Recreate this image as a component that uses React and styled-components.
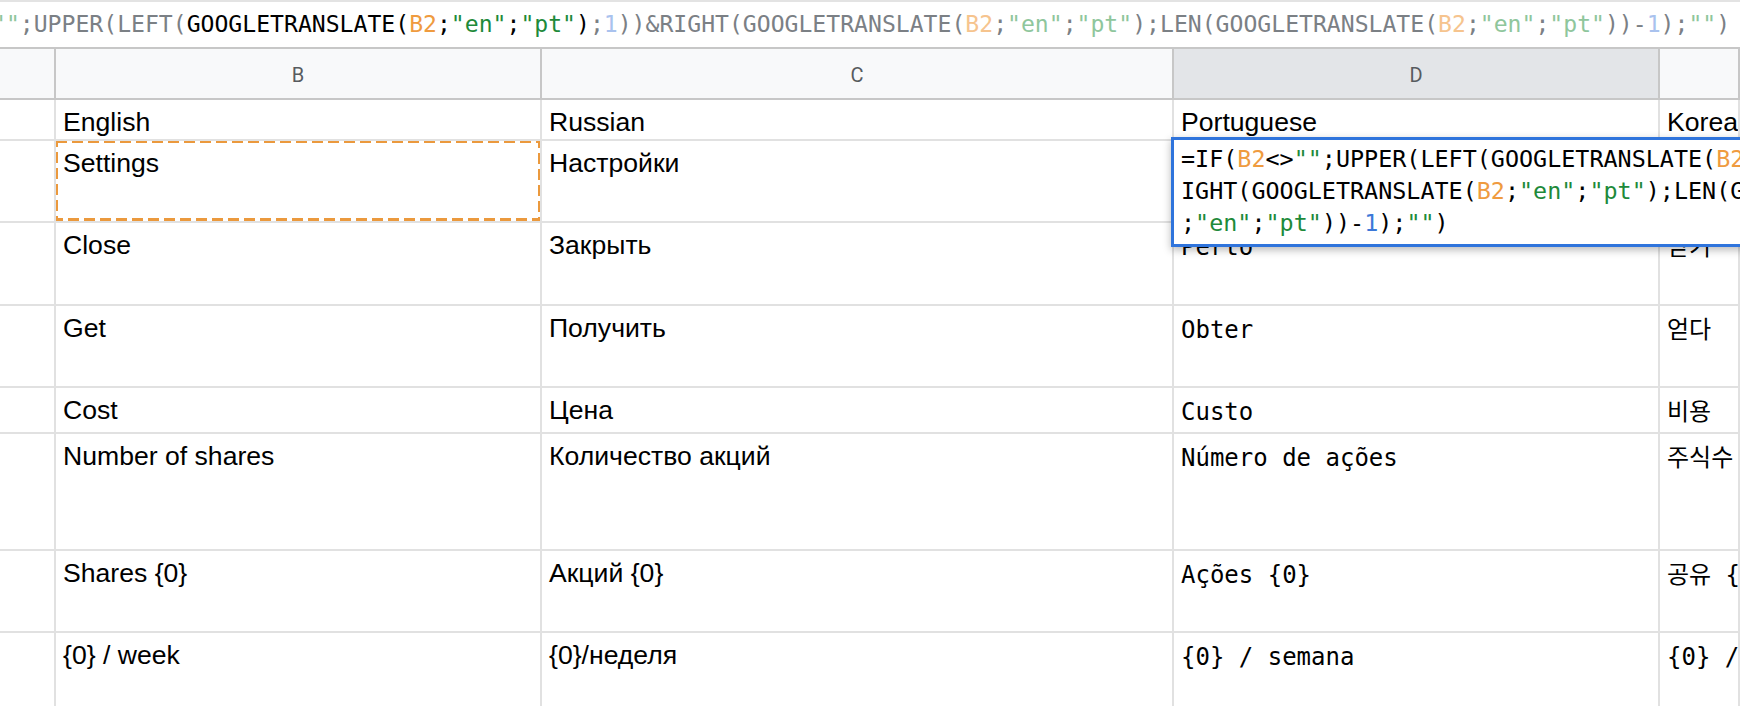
import React from 'react';
import styled, { createGlobalStyle } from 'styled-components';

// ─── Palette ──────────────────────────────────────────────────────────────────
const C = {
  k: '#000000',
  muted: '#7b8085',
  ref: '#ef9b3f',
  refFaded: '#f6c48e',
  str: '#1e8a3a',
  strFaded: '#8fc69c',
  num: '#3c78d8',
  numFaded: '#a9c2ee',
};

// ─── Data ─────────────────────────────────────────────────────────────────────
const columns = [
  { key: 'A', width: 56 },
  { key: 'B', width: 486, label: 'B' },
  { key: 'C', width: 632, label: 'C' },
  { key: 'D', width: 486, label: 'D', active: true },
  { key: 'E', width: 0 },
];

const rowHeights = [41, 82, 83, 82, 46, 117, 82, 82];

const rows = [
  ['English', 'Russian', 'Portuguese', 'Korean'],
  ['Settings', 'Настройки', 'Configurações', '설정'],
  ['Close', 'Закрыть', 'Perto', '닫기'],
  ['Get', 'Получить', 'Obter', '얻다'],
  ['Cost', 'Цена', 'Custo', '비용'],
  ['Number of shares', 'Количество акций', 'Número de ações', '주식수'],
  ['Shares {0}', 'Акций {0}', 'Ações {0}', '공유 {0}'],
  ['{0} / week', '{0}/неделя', '{0} / semana', '{0} / 주'],
];

// formula bar, scrolled so that "=IF(B2<>" is out of view
const barTokens = [
  ['""', C.strFaded], [';UPPER(LEFT(', C.muted], ['GOOGLETRANSLATE(', C.k], ['B2', C.ref],
  [';', C.k], ['"en"', C.str], [';', C.k], ['"pt"', C.str], [')', C.k], [';', C.muted],
  ['1', C.numFaded], ['))&RIGHT(GOOGLETRANSLATE(', C.muted], ['B2', C.refFaded], [';', C.muted],
  ['"en"', C.strFaded], [';', C.muted], ['"pt"', C.strFaded], [');LEN(GOOGLETRANSLATE(', C.muted],
  ['B2', C.refFaded], [';', C.muted], ['"en"', C.strFaded], [';', C.muted], ['"pt"', C.strFaded],
  ['))-', C.muted], ['1', C.numFaded], [');', C.muted], ['""', C.strFaded], [')', C.muted],
];

const editorLines = [
  [['=IF(', C.k], ['B2', C.ref], ['<>', C.k], ['""', C.str], [';UPPER(LEFT(GOOGLETRANSLATE(', C.k],
    ['B2', C.ref], [';', C.k], ['"en"', C.str], [';', C.k], ['"pt"', C.str], [');', C.k], ['1', C.num], ['))&R', C.k]],
  [['IGHT(GOOGLETRANSLATE(', C.k], ['B2', C.ref], [';', C.k], ['"en"', C.str], [';', C.k], ['"pt"', C.str],
    [');LEN(GOOGLETRANSLATE(', C.k], ['B2', C.ref]],
  [[';', C.k], ['"en"', C.str], [';', C.k], ['"pt"', C.str], ['))-', C.k], ['1', C.num], [');', C.k],
    ['""', C.str], [')', C.k]],
];

// ─── Styled components ────────────────────────────────────────────────────────
const GlobalStyle = createGlobalStyle`
  html, body { margin: 0; padding: 0; background: #ffffff; }
  body { overflow: hidden; }
`;

const Page = styled.div`
  position: relative;
  width: 1740px;
  height: 706px;
  overflow: hidden;
  background: #ffffff;
  display: flex;
  flex-direction: column;
`;

const FormulaBar = styled.div`
  flex: 0 0 49px;
  box-sizing: border-box;
  border-top: 2px solid #e3e3e3;
  border-bottom: 2px solid #c7c7c7;
  display: flex;
  align-items: center;
  overflow: hidden;
  white-space: pre;
  font-family: "DejaVu Sans Mono", "Liberation Mono", monospace;
  font-size: 23.1px;
  padding-bottom: 1px;
`;

const BarText = styled.div`
  margin-left: -8px;
`;

const Tok = styled.span`
  color: ${({ $c }) => $c};
`;

const Sheet = styled.div`
  display: grid;
  grid-template-columns: ${columns.map((c) => (c.width ? `${c.width}px` : '1fr')).join(' ')};
  grid-template-rows: 51px ${rowHeights.map((h) => `${h}px`).join(' ')};
`;

const ColHeader = styled.div`
  box-sizing: border-box;
  background: ${({ $active }) => ($active ? '#e3e5e8' : '#f8f9fa')};
  border-right: 2px solid #c7c7c7;
  border-bottom: 2px solid #c7c7c7;
  display: flex;
  align-items: center;
  justify-content: center;
  font-family: Roboto, "Liberation Sans", sans-serif;
  font-size: 20px;
  color: #575b5f;
  padding-top: 2px;
`;

const RowHeader = styled.div`
  box-sizing: border-box;
  background: #ffffff;
  border-right: 2px solid #e1e1e1;
  border-bottom: 2px solid #e1e1e1;
`;

const Cell = styled.div`
  position: relative;
  box-sizing: border-box;
  border-right: 2px solid #e1e1e1;
  border-bottom: 2px solid #e1e1e1;
  padding: ${({ $mono }) => ($mono ? '9px 7px 0' : '7px 7px 0')};
  white-space: nowrap;
  overflow: hidden;
  color: #000000;
  font-family: ${({ $mono }) =>
    $mono
      ? '"DejaVu Sans Mono", "Liberation Mono", "Noto Sans CJK KR", monospace'
      : '"Liberation Sans", Arial, "Noto Sans CJK KR", sans-serif'};
  font-size: ${({ $mono }) => ($mono ? '24px' : '26.6px')};
  line-height: 30px;
`;

const Marquee = styled.svg`
  position: absolute;
  left: -2px;
  top: -2px;
  width: 488px;
  height: 83px;
  pointer-events: none;
`;

const Editor = styled.div`
  position: absolute;
  left: 1171px;
  top: 137px;
  width: 860px;
  box-sizing: border-box;
  background: #ffffff;
  border: 3px solid #2f74dc;
  box-shadow: 0 3px 8px rgba(0, 0, 0, 0.28);
  padding: 3px 7px 5px;
  font-family: "DejaVu Sans Mono", "Liberation Mono", monospace;
  font-size: 23.4px;
  line-height: 32px;
  white-space: pre;
`;

const EditorLine = styled.div``;

// ─── Component ────────────────────────────────────────────────────────────────
const Tokens = ({ list }) =>
  list.map(([t, c], i) => (
    <Tok key={i} $c={c}>
      {t}
    </Tok>
  ));

export default function App() {
  return (
    <>
      <GlobalStyle />
      <Page>
        <FormulaBar>
          <BarText>
            <Tokens list={barTokens} />
          </BarText>
        </FormulaBar>

        <Sheet>
          {columns.map((c) => (
            <ColHeader key={c.key} $active={c.active}>
              {c.label}
            </ColHeader>
          ))}

          {rows.map((r, ri) => (
            <React.Fragment key={ri}>
              <RowHeader />
              {r.map((v, ci) => (
                <Cell key={ci} $mono={ri > 0 && ci >= 2}>
                  {v}
                  {ri === 1 && ci === 0 && (
                    <Marquee viewBox="0 0 488 83">
                      <rect
                        x="2"
                        y="2"
                        width="484"
                        height="79"
                        fill="none"
                        stroke="#eb993d"
                        strokeWidth="4"
                        strokeDasharray="11 5"
                      />
                    </Marquee>
                  )}
                </Cell>
              ))}
            </React.Fragment>
          ))}
        </Sheet>

        <Editor>
          {editorLines.map((l, i) => (
            <EditorLine key={i}>
              <Tokens list={l} />
            </EditorLine>
          ))}
        </Editor>
      </Page>
    </>
  );
}
